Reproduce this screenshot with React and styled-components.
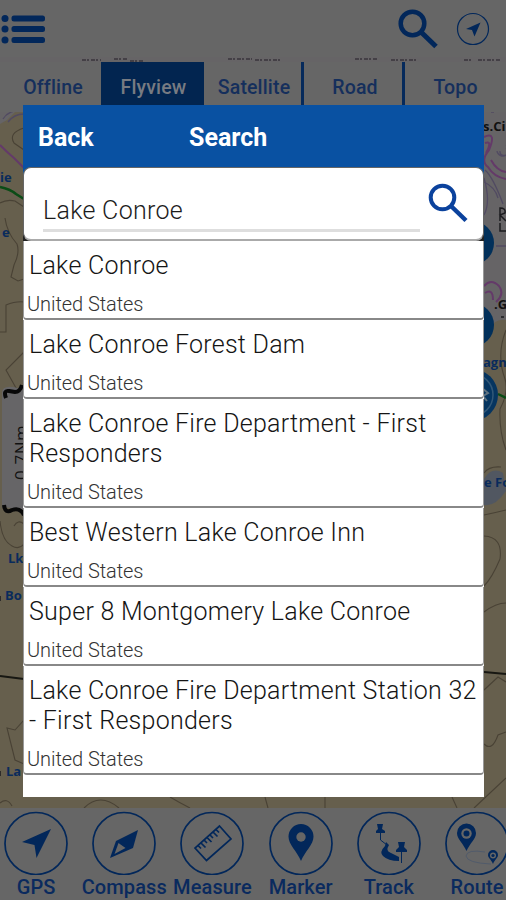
import React from "react";
import styled, { createGlobalStyle } from "styled-components";

const GlobalStyle = createGlobalStyle`
  * {
    box-sizing: border-box;
  }

  body {
    margin: 0;
    background: #666;
    font-family: Roboto, "Liberation Sans", sans-serif;
  }
`;

const navy = "#02275a";

const Screen = styled.div`
  position: relative;
  width: 506px;
  height: 900px;
  overflow: hidden;
  display: flex;
  flex-direction: column;
  justify-content: space-between;
  color: ${navy};
`;

const MapCanvas = styled.svg`
  position: absolute;
  top: 0;
  left: 0;
`;

const TopArea = styled.div`
  position: relative;
`;

const TopBar = styled.header`
  height: 57px;
  background: #666;
  display: flex;
  align-items: center;
  justify-content: space-between;
  padding-right: 16px;
`;

const TopIcons = styled.div`
  display: flex;
  align-items: center;
  gap: 17px;
`;

const Tabs = styled.nav`
  display: grid;
  grid-template-columns: 101px 103px 100px 101px 101px;
  height: 50px;
  margin-top: 5px;
`;

const Tab = styled.div`
  background: ${(props) => (props.$active ? "#022550" : "#666")};
  color: ${(props) => (props.$active ? "#777b82" : "#152f5c")};
  border-right: ${(props) => (props.$line ? "3px solid #062a5b" : "none")};
  padding: ${(props) => props.$pad || "14px 0 0"};
  text-align: center;
  font-size: 19.5px;
  font-weight: 500;
  line-height: 24px;
  letter-spacing: 0.15px;
  white-space: nowrap;
`;

const Toolbar = styled.footer`
  position: relative;
  height: 92px;
  background: #666;
  display: flex;
  padding-top: 3px;
  margin-right: -20px;
  margin-left: -8px;
`;

const Tool = styled.div`
  flex: 0 0 88.2px;
  display: flex;
  flex-direction: column;
  align-items: center;
  font-size: 20px;
  font-weight: 500;
  line-height: 24px;
  letter-spacing: 0.1px;
  white-space: nowrap;
`;

const ToolLabel = styled.span`
  color: #0a2a5e;
`;

const Dialog = styled.section`
  position: absolute;
  top: 105px;
  left: 23px;
  width: 461px;
  height: 692px;
  background: #fff;
  color: #1c1c1c;
  overflow: hidden;
`;

const DialogHeader = styled.div`
  height: 62px;
  background: #0951a2;
  color: #fff;
  display: grid;
  grid-template-columns: 151px 1fr;
  align-items: center;
  padding: 2px 0 0 15px;
  font-size: 25px;
  font-weight: 700;
`;

const SearchFrame = styled.div`
  background: linear-gradient(#0951a2 50%, #222 50%);
`;

const SearchBox = styled.div`
  height: 74px;
  background: #fff;
  border: 1px solid #666;
  border-bottom-width: 2px;
  border-bottom-color: #aaa;
  border-radius: 8px;
  display: flex;
  align-items: flex-start;
  justify-content: space-between;
  padding: 14px 14px 0 19px;
`;

const SearchField = styled.div`
  width: 377px;
  height: 50px;
  padding-top: 14px;
  border-bottom: 3px solid #dedede;
  font-size: 25px;
  font-weight: 300;
  line-height: 30px;
  letter-spacing: 0.3px;
`;

const Result = styled.div`
  border: 1px solid #999;
  border-top: none;
  border-bottom: 2px solid #888;
  border-radius: 0 0 4px 4px;
  padding: 10px 0 1px 5px;
`;

const Place = styled.div`
  color: #151515;
  font-size: 25px;
  font-weight: 300;
  line-height: 29.4px;
  letter-spacing: 0.26px;
  white-space: nowrap;
`;

const Country = styled.div`
  margin: 11.8px 0 0 -2px;
  color: #333;
  font-size: 20px;
  font-weight: 300;
  line-height: 25px;
  letter-spacing: -0.07px;
`;

const tabs = [
  { name: "Offline", pad: "14px 0 0 5px" },
  { name: "Flyview", active: true, pad: "14px 0 0 2px" },
  { name: "Satellite", line: true, pad: "14px 0 0 3px" },
  { name: "Road", line: true, pad: "14px 0 0 4px" },
  { name: "Topo" },
];

const results = [
  ["Lake Conroe"],
  ["Lake Conroe Forest Dam"],
  ["Lake Conroe Fire Department - First", "Responders"],
  ["Best Western Lake Conroe Inn"],
  ["Super 8 Montgomery Lake Conroe"],
  ["Lake Conroe Fire Department Station 32", "- First Responders"],
];

const Terrain = () => (
  <MapCanvas width="506" height="900" fill="none">
    <rect width="506" height="900" fill="#665f4d" />
    <path d="M0 57H506V320Q494 318 490 330L480 334V105H24Q14 112 7 120L0 124Z" fill="#666466" />
    <g stroke="#514a62" strokeWidth="1.3">
      <path d="M0 63Q7 72 0 84M0 88Q8 94 0 103M3 119Q8 110 24 109M8 122Q14 114 24 114M485 170Q493 177 503 204M484 182Q495 187 498 198M506 67Q497 80 506 92M496 246H506M484 178Q491 202 484 215" />
      <path d="M502 98L506 102M491 112H494M498 111H501M497 151a6 6 0 1 0 9-6M500 151a4 4 0 1 0 6-3" />
    </g>
    <g stroke="#643a69" strokeWidth="2">
      <path d="M0 145Q8 153 14 158L24 168M0 107L4 103M484 137Q497 131 489 150Q480 161 488 167Q494 177 506 179M485 143Q493 140 486 153M491 160Q497 171 506 172M484 286Q491 278 499 286Q505 294 496 302M485 293Q493 288 493 300" />
    </g>
    <g stroke="#494235" strokeWidth="1.1">
      <path d="M24 128Q8 133 14 143L24 150M0 203Q7 199 15 201L24 207M5 218Q7 233 17 244Q20 253 14 265L11 277L18 281L24 279M24 302Q16 301 6 305V332H0M24 352L6 370L16 388L22 393M0 521Q2 541 12 546Q19 550 24 544M14 526Q18 519 24 524M24 720L15 730L7 728L15 760L24 764M0 803Q7 797 12 806M84 808Q100 792 119 808M170 797Q180 803 190 808M265 797L268 808M325 797V808M452 797L457 808M474 808L506 778" />
      <path d="M506 330Q496 355 505 379Q509 392 500 409Q499 431 506 450M484 473Q489 466 501 467M484 515Q494 513 506 510M484 536Q503 537 500 559Q492 578 484 586M484 612Q496 603 506 603M484 744Q492 752 498 735L506 732M484 690L498 677L506 682" />
    </g>
    <path d="M0 676L24 679M484 672L506 674" stroke="#171712" strokeWidth="2" />
    <path d="M0 187Q10 189 16 194L24 199M498 394L506 398" stroke="#0a4c16" strokeWidth="2.5" />
    <path d="M2 393Q2 382 24 390V515Q9 505 2 508Z" fill="#666567" />
    <path d="M6 398Q3 390 9 391L15 392Q20 392 22 385M4 505Q5 514 12 510Q20 507 24 515" stroke="#080808" strokeWidth="4" />
    <path d="M484 479Q492 466 503 473L506 491Q495 507 484 505Z" fill="#515761" />
    <circle cx="472" cy="243" r="22" fill="#02305a" />
    <circle cx="472" cy="325" r="22" fill="#02305a" />
    <circle cx="472" cy="395" r="26" fill="#063560" />
    <circle cx="472" cy="395" r="21" stroke="#315777" strokeWidth="1.5" />
    <path d="M482 388l6 5-5 3 4 5" stroke="#607381" strokeWidth="2" />
    <g fill="#092b5c" fontFamily="Open Sans, sans-serif" fontWeight="700" fontSize="13">
      <text x="0" y="182">ie</text>
      <text x="2" y="237">e</text>
      <text x="8" y="563">Lk</text>
      <text x="5" y="600">Bo</text>
      <text x="6" y="776">La</text>
      <text x="483" y="367">agn</text>
      <text x="484" y="487">e Fo</text>
    </g>
    <g fill="#111" fontFamily="Open Sans, sans-serif" fontWeight="700" fontSize="13">
      <text x="483" y="131">s.Ci</text>
      <text x="494" y="309">.G</text>
      <text transform="translate(27 480) rotate(-90)" fontWeight="400" fontSize="17" letterSpacing="0.6">0.7Nm</text>
    </g>
    <path d="M500 221V208Q506 208 505 213L500 215L506 221M500 223V231H506M501 317H504M0 601V596M0 771V776" stroke="#1b1b1f" strokeWidth="1.5" />
    <path d="M82 60h19M114 59h14M130 61h13M228 59h24M255 60h25M355 59h22M391 60h27M464 60h9M478 60h23" stroke="#444046" strokeWidth="2" strokeDasharray="4 1 2 2" />
  </MapCanvas>
);

const MenuIcon = () => (
  <svg width="48" height="57" fill={navy}>
    {[18.5, 29, 40].map((y) => (
      <g key={y}>
        <circle cx="5" cy={y} r="3.5" />
        <rect x="11.5" y={y - 3} width="33.5" height="6" rx="2.5" />
      </g>
    ))}
  </svg>
);

const SearchIcon = ({ color, weight = 4 }) => (
  <svg width="42" height="42" fill="none" stroke={color} strokeWidth={weight}>
    <circle cx="15.5" cy="15.5" r="11.8" />
    <path d="M24 24L39 38.5" strokeWidth={weight + 0.5} />
  </svg>
);

const LocateIcon = () => (
  <svg width="34" height="34">
    <circle cx="17" cy="17" r="15.5" fill="none" stroke={navy} strokeWidth="1.2" />
    <path d="M24.5 10.5L18.5 24.5L16 18L10 17Z" fill={navy} />
  </svg>
);

const icons = {
  GPS: <path d="M47 18L32.5 47L30.5 34L18 31Z" fill={navy} />,
  Compass: (
    <g>
      <path d="M46 19L41 37L18 47L24 30Z" fill={navy} />
      <path d="M26.5 32L33.5 37L22.5 43Z" fill="#666" />
    </g>
  ),
  Measure: (
    <g fill="none" stroke={navy} strokeWidth="1.7">
      <path d="M39.5 15L51 28L26.5 49.5L15 37Z" />
      <path d="M18 34.5l3 3M21 32l4.5 4.5M24 29l3 3M27 26.5l4.5 4.5M30 24l3 3M33 21l4.5 4.5M36 18.5l3 3" />
    </g>
  ),
  Marker: (
    <g>
      <path d="M32 50C28 40 19.5 34 19.5 25.5a12.5 12.5 0 0 1 25 0C44.5 34 36 40 32 50Z" fill={navy} />
      <circle cx="32" cy="26" r="4.7" fill="#666" />
    </g>
  ),
  Track: (
    <g fill={navy}>
      <path d="M20 13h6l-1 5 3 2v2H19v-2l2-2ZM41 31h7l-1 5 3 3v2H39v-2l3-3Z" />
      <path d="M23.5 20V29L30 34M44.5 38V52" fill="none" stroke={navy} />
      <path d="M29 31L32 34Q28 40 34 42L42 46V50Q31 50 26 45Q22 41 28 35Z" />
    </g>
  ),
  Route: (
    <g fill={navy}>
      <path d="M21.5 40C18 32 12 28 12 22a9.5 9.5 0 0 1 19 0C31 28 25 32 21.5 40Z" />
      <circle cx="21.5" cy="22.5" r="5.2" fill="#666" />
      <circle cx="21.5" cy="22.5" r="3" />
      <path d="M48 53C46 48 43 47 43 44a5 5 0 0 1 10 0C53 47 50 48 48 53Z" />
      <circle cx="48" cy="44.5" r="3" fill="#666" />
      <circle cx="48" cy="44.5" r="1.6" />
      <path d="M40 41Q22 38 21 45Q22 52 46 53" fill="none" stroke="#515b6b" />
    </g>
  ),
};

const ToolIcon = ({ name }) => (
  <svg width="64" height="64">
    <circle cx="32" cy="32.5" r="31" fill="none" stroke={navy} strokeWidth="1.7" />
    {icons[name]}
  </svg>
);

export default function App() {
  return (
    <>
      <GlobalStyle />
      <Screen>
        <Terrain />
        <TopArea>
          <TopBar>
            <MenuIcon />
            <TopIcons>
              <SearchIcon color={navy} weight={4.5} />
              <LocateIcon />
            </TopIcons>
          </TopBar>
          <Tabs>
            {tabs.map((tab) => (
              <Tab key={tab.name} $active={tab.active} $line={tab.line} $pad={tab.pad}>
                {tab.name}
              </Tab>
            ))}
          </Tabs>
        </TopArea>
        <Toolbar>
          {Object.keys(icons).map((name) => (
            <Tool key={name}>
              <ToolIcon name={name} />
              <ToolLabel>{name}</ToolLabel>
            </Tool>
          ))}
        </Toolbar>
        <Dialog>
          <DialogHeader>
            <span>Back</span>
            <span>Search</span>
          </DialogHeader>
          <SearchFrame>
            <SearchBox>
              <SearchField>Lake Conroe</SearchField>
              <SearchIcon color="#0b429d" />
            </SearchBox>
          </SearchFrame>
          {results.map((lines) => (
            <Result key={lines[0]}>
              {lines.map((line) => (
                <Place key={line}>{line}</Place>
              ))}
              <Country>United States</Country>
            </Result>
          ))}
        </Dialog>
      </Screen>
    </>
  );
}
